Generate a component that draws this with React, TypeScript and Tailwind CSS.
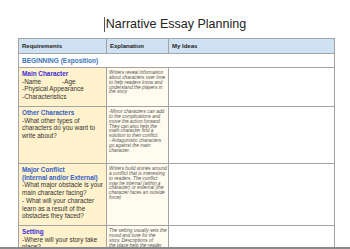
import React from "react";

const font = { fontFamily: '"Liberation Sans", Arial, sans-serif' };

function Lines({ lines }: { lines: string[] }) {
  return (
    <>
      {lines.map((l, i) => (
        <div key={i} className="whitespace-nowrap">
          {l}
        </div>
      ))}
    </>
  );
}

function Title({ children, color }: { children: React.ReactNode; color: string }) {
  return (
    <div className="font-bold whitespace-nowrap" style={{ color }}>
      {children}
    </div>
  );
}

export default function App() {
  const leftCell =
    "border-r border-b border-[#a3a3a3] bg-[#fff2cc] pl-[3px] pt-[2px] text-[6.4px] leading-[7.7px] text-[#333] overflow-hidden";
  const midCell =
    "border-r border-b border-[#a3a3a3] bg-[#fffbee] pl-[2px] pt-[3px] text-[4.75px] leading-[4.85px] italic text-[#555] overflow-hidden";
  const rightCell = "border-r border-b border-[#a3a3a3] bg-white";
  const row = "grid grid-cols-[88px_62px_166px]";

  return (
    <div className="relative w-[350px] h-[249px] overflow-hidden bg-white" style={font}>
      {/* Title */}
      <div className="h-[38px] pt-[17px] flex justify-center">
        <div className="flex items-start">
          <span className="inline-block w-[1px] h-[15px] bg-[#555] mr-[1px]" />
          <span className="text-[12.5px] leading-[15px] text-[#222]">Narrative Essay Planning</span>
        </div>
      </div>

      {/* Table */}
      <div className="ml-[18px] w-[317px] border-l border-t border-[#a3a3a3]">
        <div className={`${row} h-[15px] bg-[#cfe2f3] text-[6px] font-bold text-[#222]`}>
          <div className="border-r border-b border-[#a3a3a3] pl-[3px] flex items-center">Requirements</div>
          <div className="border-r border-b border-[#a3a3a3] pl-[3px] flex items-center">Explanation</div>
          <div className="border-r border-b border-[#a3a3a3] pl-[3px] flex items-center">My Ideas</div>
        </div>

        <div className="h-[14px] border-r border-b border-[#a3a3a3] pl-[3px] flex items-center text-[6.5px] font-bold text-[#3d74b6]">
          BEGINNING (Exposition)
        </div>

        <div className={`${row} h-[39px]`}>
          <div className={leftCell}>
            <Title color="#3b2ed2">Main Character</Title>
            <div className="whitespace-nowrap">
              <span className="inline-block w-[40px]">-Name</span>
              <span>-Age</span>
            </div>
            <Lines lines={["-Physical Appearance", "-Characteristics"]} />
          </div>
          <div className={midCell}>
            <Lines
              lines={[
                "Writers reveal information",
                "about characters over time",
                "to help readers know and",
                "understand the players in",
                "the story",
              ]}
            />
          </div>
          <div className={rightCell} />
        </div>

        <div className={`${row} h-[57px]`}>
          <div className={leftCell}>
            <Title color="#2f5ec6">Other Characters</Title>
            <Lines lines={["-What other types of", "characters do you want to", "write about?"]} />
          </div>
          <div className={midCell}>
            <Lines
              lines={[
                "-Minor characters can add",
                "to the complications and",
                "move the action forward.",
                "They can also help the",
                "main character find a",
                "solution to their conflict.",
                "- Antagonistic characters",
                "go against the main",
                "character.",
              ]}
            />
          </div>
          <div className={rightCell} />
        </div>

        <div className={`${row} h-[62px]`}>
          <div className={leftCell}>
            <Title color="#2f5ec6">
              <div>Major Conflict</div>
              <div>(Internal and/or External)</div>
            </Title>
            <Lines
              lines={[
                "-What major obstacle is your",
                "main character facing?",
                "- What will your character",
                "learn as a result of the",
                "obstacles they faced?",
              ]}
            />
          </div>
          <div className={midCell}>
            <Lines
              lines={[
                "Writers build stories around",
                "a conflict that is interesting",
                "to readers. The conflict",
                "may be internal (within a",
                "character) or external (the",
                "character faces an outside",
                "force)",
              ]}
            />
          </div>
          <div className={rightCell} />
        </div>

        <div className={`${row} h-[60px]`}>
          <div className={leftCell}>
            <Title color="#3b2ed2">Setting</Title>
            <Lines lines={["-Where will your story take", "place?"]} />
          </div>
          <div className={midCell}>
            <Lines
              lines={[
                "The setting usually sets the",
                "mood and tone for the",
                "story. Descriptions of",
                "the place help the reader",
              ]}
            />
          </div>
          <div className={rightCell} />
        </div>
      </div>

      <div className="absolute left-0 right-0 bottom-0 h-[2px] bg-[#8a8a8a]" />
    </div>
  );
}
